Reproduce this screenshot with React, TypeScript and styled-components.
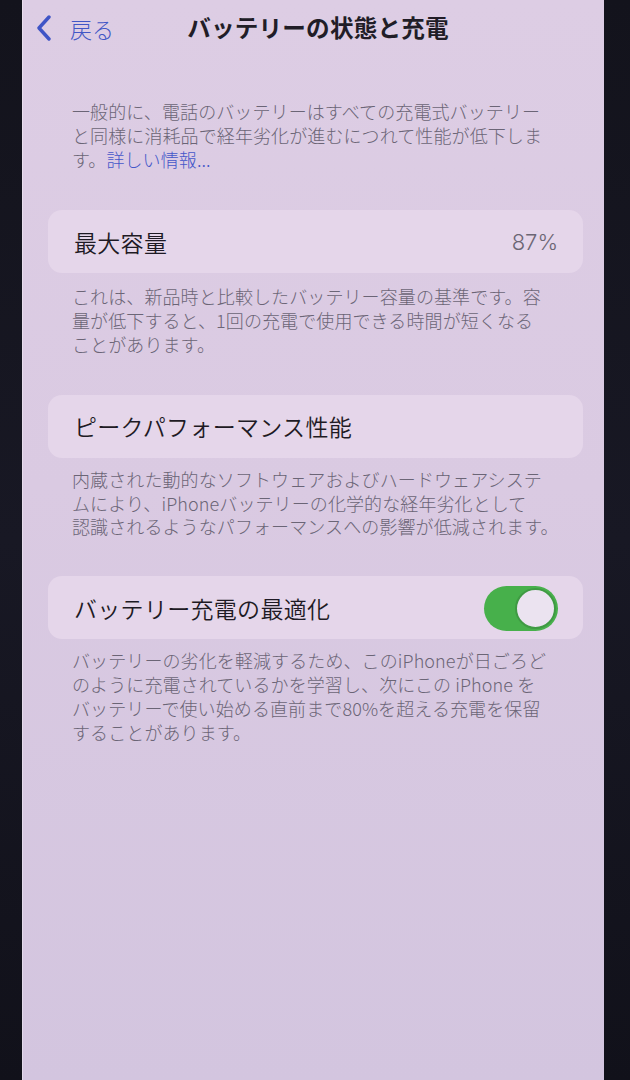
import React, { useState } from "react";
import styled, { createGlobalStyle } from "styled-components";

const GlobalStyle = createGlobalStyle`
  html, body {
    margin: 0;
    padding: 0;
    background: #12121a;
  }
  body {
    font-family: "Noto Sans CJK JP", "Noto Sans", sans-serif;
    -webkit-font-smoothing: antialiased;
  }
`;

const Device = styled.div`
  display: flex;
  width: 630px;
  height: 1080px;
  overflow: hidden;
  background: #12121a;
`;

const Bezel = styled.div<{ $w: number }>`
  flex: 0 0 ${(p) => p.$w}px;
  background: linear-gradient(180deg, #13131c 0%, #181824 50%, #11111a 100%);
`;

const Screen = styled.div`
  flex: 0 0 582px;
  height: 1080px;
  display: flex;
  flex-direction: column;
  background: linear-gradient(180deg, #ddcde4 0%, #dacae2 45%, #d3c5df 100%);
  box-shadow: inset 1px 0 0 rgba(255, 255, 255, 0.35);
`;

const NavBar = styled.header`
  height: 56px;
  display: grid;
  grid-template-columns: 1fr auto 1fr;
  align-items: center;
  padding: 0 4px 0 14px;
`;

const BackButton = styled.button`
  display: flex;
  align-items: center;
  gap: 18px;
  border: 0;
  background: none;
  padding: 0;
  color: #4257c6;
  font-family: inherit;
  font-size: 22px;
  font-weight: 300;
  cursor: pointer;
  justify-self: start;
`;

const Title = styled.h1`
  margin: 0 0 2px;
  font-size: 23.6px;
  font-weight: 700;
  color: #211d27;
  letter-spacing: 0.2px;
`;

const Content = styled.main`
  display: flex;
  flex-direction: column;
  padding: 44px 21px 0 26px;
`;

const Note = styled.p<{ $top?: number }>`
  margin: ${(p) => p.$top ?? 0}px 0 0;
  padding-left: 24px;
  font-size: 18px;
  font-weight: 300;
  line-height: 23.8px;
  color: #6b6576;
  letter-spacing: 0.1px;
`;

const Link = styled.a`
  color: #4558c9;
  text-decoration: none;
`;

const Card = styled.section<{ $top: number }>`
  margin-top: ${(p) => p.$top}px;
  height: 63px;
  border-radius: 14px;
  background: #e5d6ea;
  display: flex;
  align-items: center;
  justify-content: space-between;
  padding: 0 25px 0 26px;
`;

const Label = styled.span`
  font-size: 23px;
  font-weight: 350;
  color: #1e1a24;
  letter-spacing: 0.3px;
`;

const Value = styled.span`
  font-size: 22px;
  color: #6c6674;
  font-family: "Inter", "Noto Sans", sans-serif;
  font-weight: 300;
`;

const Track = styled.button<{ $on: boolean }>`
  position: relative;
  width: 74px;
  height: 45px;
  margin-top: 2px;
  border-radius: 23px;
  border: 0;
  padding: 0;
  background: ${(p) => (p.$on ? "#47b04b" : "#cfc4d6")};
  cursor: pointer;
`;

const Thumb = styled.span<{ $on: boolean }>`
  position: absolute;
  top: 2px;
  left: ${(p) => (p.$on ? 31 : 2)}px;
  width: 37px;
  height: 37px;
  border-radius: 50%;
  background: #ebe3f0;
  border: 2px solid #3f9a43;
`;

function Chevron() {
  return (
    <svg width="16" height="26" viewBox="0 0 16 26" fill="none">
      <path
        d="M13 2 L3 13 L13 24"
        stroke="#3f54c6"
        strokeWidth="3.4"
        strokeLinecap="round"
        strokeLinejoin="round"
      />
    </svg>
  );
}

export default function App() {
  const [optimized, setOptimized] = useState(true);
  return (
    <>
      <GlobalStyle />
      <Device>
        <Bezel $w={22} />
        <Screen>
          <NavBar>
            <BackButton>
              <Chevron />
              戻る
            </BackButton>
            <Title>バッテリーの状態と充電</Title>
            <span />
          </NavBar>
          <Content>
            <Note>
              一般的に、電話のバッテリーはすべての充電式バッテリー
              <br />
              と同様に消耗品で経年劣化が進むにつれて性能が低下しま
              <br />
              す。<Link href="#">詳しい情報...</Link>
            </Note>

            <Card $top={39}>
              <Label>最大容量</Label>
              <Value>87%</Value>
            </Card>
            <Note $top={12}>
              これは、新品時と比較したバッテリー容量の基準です。容
              <br />
              量が低下すると、1回の充電で使用できる時間が短くなる
              <br />
              ことがあります。
            </Note>

            <Card $top={38}>
              <Label>ピークパフォーマンス性能</Label>
            </Card>
            <Note $top={10}>
              内蔵された動的なソフトウェアおよびハードウェアシステ
              <br />
              ムにより、iPhoneバッテリーの化学的な経年劣化として
              <br />
              認識されるようなパフォーマンスへの影響が低減されます。
            </Note>

            <Card $top={37}>
              <Label>バッテリー充電の最適化</Label>
              <Track $on={optimized} onClick={() => setOptimized(!optimized)}>
                <Thumb $on={optimized} />
              </Track>
            </Card>
            <Note $top={10}>
              バッテリーの劣化を軽減するため、このiPhoneが日ごろど
              <br />
              のように充電されているかを学習し、次にこの iPhone を
              <br />
              バッテリーで使い始める直前まで80%を超える充電を保留
              <br />
              することがあります。
            </Note>
          </Content>
        </Screen>
        <Bezel $w={26} />
      </Device>
    </>
  );
}
